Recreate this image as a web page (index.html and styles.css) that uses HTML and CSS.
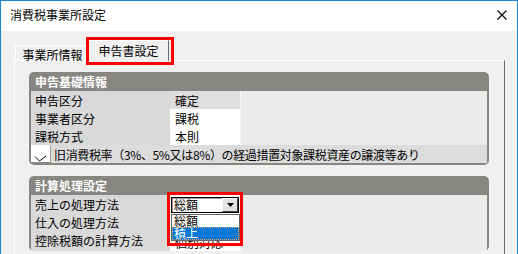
FILE: index.html
```html
<!DOCTYPE html>
<html lang="ja">
<head>
<meta charset="utf-8">
<link rel="stylesheet" href="styles.css">
</head>
<body>
<div class="window">
  <div class="titlebar">
    <span class="title">消費税事業所設定</span>
    <svg class="close" width="10" height="10" viewBox="0 0 10 10"><path d="M0.5 0.5L9.5 9.5M9.5 0.5L0.5 9.5" stroke="#000" stroke-width="1.1" fill="none"/></svg>
  </div>
  <div class="client">
    <div class="tabs">
      <div class="tab">事業所情報</div>
      <div class="tab active">申告書設定</div>
    </div>
    <div class="panel">
      <div class="group">
        <div class="ghead">申告基礎情報</div>
        <div class="row"><div class="lbl">申告区分</div><div class="val gray">確定</div><div class="rest"></div></div>
        <div class="row"><div class="lbl">事業者区分</div><div class="val">課税</div><div class="rest"></div></div>
        <div class="row"><div class="lbl">課税方式</div><div class="val">本則</div><div class="rest"></div></div>
        <div class="row chk">
          <div class="cb"><svg width="20" height="17" viewBox="0 0 20 17"><polyline points="4,11.5 8.5,16 15,11" fill="none" stroke="#000" stroke-width="1"/></svg></div>
          <div class="cbtext">旧消費税率（3%、5%又は8%）の経過措置対象課税資産の譲渡等あり</div>
        </div>
      </div>
      <div class="group g2">
        <div class="ghead">計算処理設定</div>
        <div class="row"><div class="lbl">売上の処理方法</div>
          <div class="val">
            <div class="combo"><span class="ctext">総額</span><span class="cbtn"><svg width="7" height="4" viewBox="0 0 7 4"><polygon points="0,0 7,0 3.5,4" fill="#000"/></svg></span></div>
          </div>
          <div class="rest"></div></div>
        <div class="row"><div class="lbl">仕入の処理方法</div><div class="val"></div><div class="rest"></div></div>
        <div class="row"><div class="lbl">控除税額の計算方法</div><div class="val"><span class="hidden-under">個別対応</span></div><div class="rest"></div></div>
      </div>
    </div>
  </div>
  <div class="listbox">
    <div class="item">総額</div>
    <div class="item sel">積上</div>
  </div>
  <div class="redbox rb1"></div>
  <div class="redbox rb2"></div>
</div>
</body>
</html>
```
FILE: styles.css
```css
* { box-sizing: border-box; }
html, body { margin: 0; padding: 0; }
body {
  width: 518px;
  height: 254px;
  overflow: hidden;
  font-family: "Noto Sans CJK JP", "Noto Sans", sans-serif;
  font-size: 12px;
  color: #000;
  background: #f0f0f0;
}
.window {
  position: relative;
  width: 518px;
  height: 254px;
  border: 1px solid #1883d7;
  border-bottom: none;
  background: #f0f0f0;
  overflow: hidden;
}
.titlebar {
  height: 30px;
  background: #fff;
  display: flex;
  align-items: center;
  padding-left: 9px;
}
.title { line-height: 16px; margin-top: -2px; }
.close { margin-left: auto; margin-right: 10px; margin-top: -2px; }
.client { padding-top: 9px; }
.tabs {
  display: flex;
  align-items: flex-end;
  height: 20px;
  margin-left: 14px;
  position: relative;
  z-index: 2;
}
.tab {
  width: 73px;
  height: 15px;
  border-top: 1px solid #fff;
  border-left: 1px solid #fff;
  border-right: 1px solid #a0a0a0;
  text-align: center;
  line-height: 15px;
  padding-top: 1px;
  padding-left: 2px;
}
.tab.active {
  width: 81px;
  height: 21px;
  margin-bottom: -1px;
  background: #f0f0f0;
  border-right: 1px solid #696969;
  line-height: 19px;
  padding-top: 0;
  padding-left: 0;
}
.panel {
  margin-left: 13px;
  width: 491px;
  height: 200px;
  border-top: 1px solid #fff;
  border-left: 1px solid #fff;
  border-right: 1px solid #696969;
  padding: 11px 0 0 14px;
}
.group {
  width: 460px;
  background: #878681;
  border-radius: 5px;
  padding: 0 2px 2px 2px;
}
.g2 { margin-top: 11px; }
.ghead {
  height: 19px;
  line-height: 19px;
  padding-left: 4px;
  color: #fff;
  font-weight: bold;
}
.row {
  display: grid;
  grid-template-columns: 139px 70px 1fr;
  height: 18px;
  border-bottom: 1px solid #a3a3a3;
}
.row:last-child { border-bottom: none; height: 18px; }
.lbl, .val, .cbtext {
  line-height: 17px;
  padding-top: 1px;
  white-space: nowrap;
  overflow: visible;
}
.lbl { background: #d9d9d9; padding-left: 4px; }
.val { background: #fff; padding-left: 5px; position: relative; }
.val.gray { background: #dedede; }
.rest { background: #ebebeb; border-left: 1px solid #f8f8f8; }
.row.chk { grid-template-columns: 20px 1fr; }
.cb { background: #fff; border-right: 1px solid #a3a3a3; height: 17px; }
.cb svg { display: block; }
.cbtext { background: #dcdcdc; padding-left: 3px; letter-spacing: -0.35px; }
.hidden-under { display: inline-block; padding-top: 2px; }
.combo {
  position: absolute;
  left: 1px;
  top: 2px;
  width: 68px;
  height: 16px;
  border: 1px solid #000;
  box-shadow: inset 1px 1px 0 #a0a0a0;
  background: #fff;
  display: flex;
  align-items: center;
}
.ctext { padding-left: 2px; line-height: 14px; }
.cbtn {
  margin-left: auto;
  width: 16px;
  height: 14px;
  background: #e1e1e1;
  border-top: 1px solid #fff;
  border-left: 1px solid #fff;
  border-right: 1px solid #404040;
  border-bottom: 1px solid #404040;
  display: flex;
  align-items: center;
  justify-content: center;
}
.listbox {
  position: absolute;
  left: 170px;
  top: 213px;
  width: 69px;
  height: 27px;
  border: 1px solid #646464;
  background: #fff;
  z-index: 3;
}
.item { height: 12px; line-height: 12px; padding-left: 2px; }
.item.sel {
  height: 13px;
  background: #0078d7;
  color: #fff;
  outline: 1px dotted #f0a060;
  outline-offset: -1px;
}
.redbox {
  position: absolute;
  border: 3px solid #f00;
  z-index: 4;
}
.rb1 { left: 85px; top: 36px; width: 88px; height: 28px; }
.rb2 { left: 166px; top: 191px; width: 76px; height: 54px; }
```
